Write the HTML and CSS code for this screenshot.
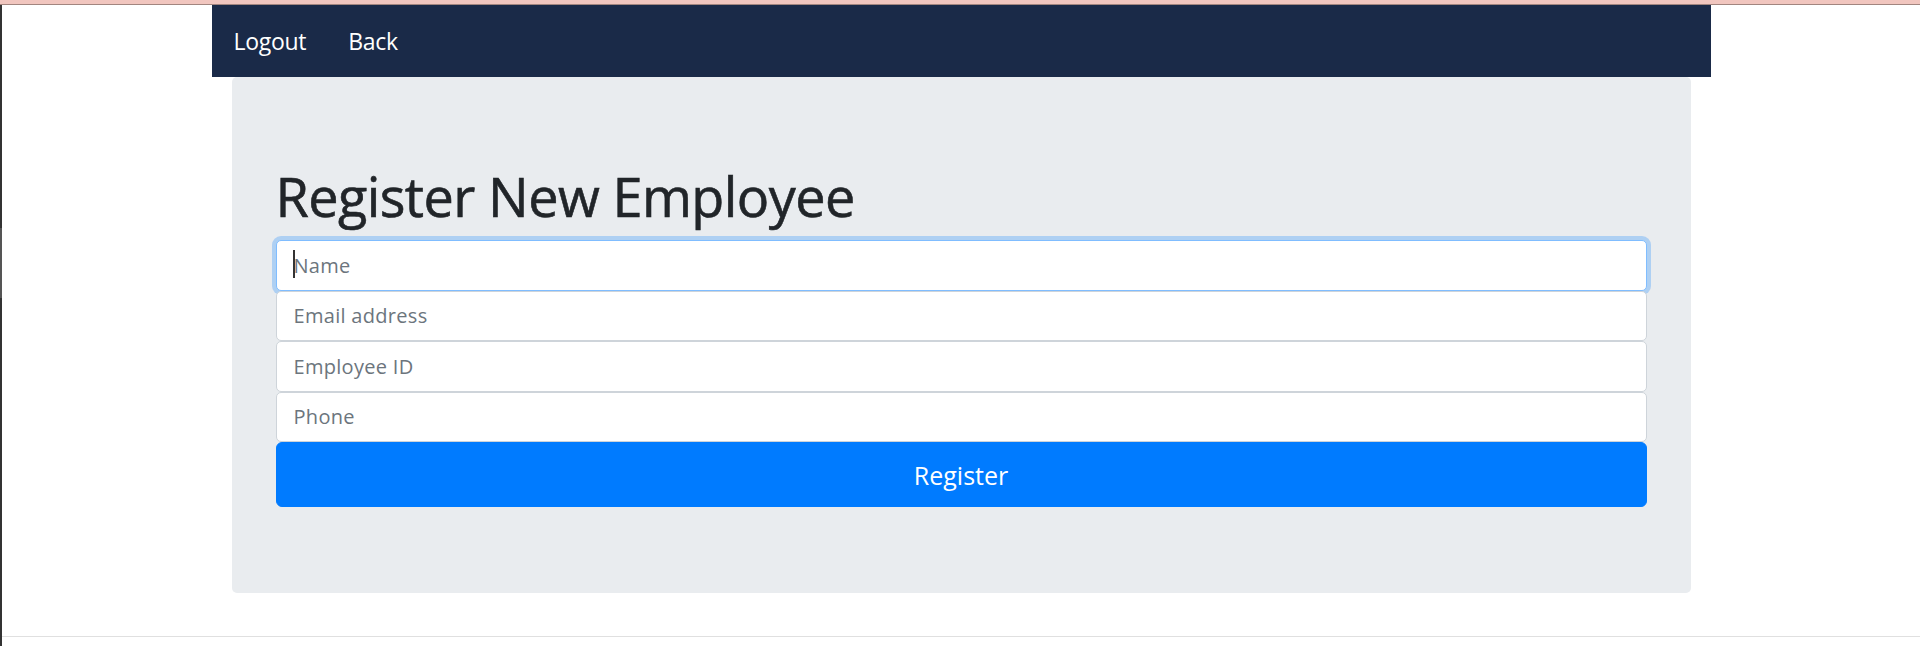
FILE: index.html
```html
<!DOCTYPE html>
<html lang="en">
<head>
<meta charset="utf-8">
<title>Register New Employee</title>
<link rel="stylesheet" href="styles.css">
</head>
<body>
<div class="topbar"></div>
<div class="window">
  <div class="edge"><div class="edge-thumb"></div></div>
  <div class="page">
    <nav class="navbar">
      <a class="nav-link" href="#">Logout</a>
      <a class="nav-link" href="#">Back</a>
    </nav>
    <div class="jumbotron">
      <h1 class="title">Register New Employee</h1>
      <form class="form">
        <div class="field field-focus"><input class="control" type="text" placeholder="Name"></div>
        <div class="field"><input class="control" type="email" placeholder="Email address"></div>
        <div class="field"><input class="control" type="text" placeholder="Employee ID"></div>
        <div class="field"><input class="control" type="text" placeholder="Phone"></div>
        <button class="btn" type="button">Register</button>
      </form>
    </div>
    <div class="footer-line"></div>
  </div>
</div>
</body>
</html>
```

FILE: styles.css
```css
* { box-sizing: border-box; }
html, body { margin: 0; padding: 0; background: #fff; }
body {
  font-family: "Open Sans", "Noto Sans", "Liberation Sans", sans-serif;
  color: #212529;
  height: 646px;
  overflow: hidden;
}
.topbar {
  height: 5px;
  background: #f1c6bf;
  border-bottom: 1px solid #a2857f;
}
.window {
  display: flex;
  height: 641px;
}
.edge {
  width: 2px;
  background: #333;
  padding-top: 223px;
}
.edge-thumb {
  height: 70px;
  background: #555;
}
.page {
  flex: 1;
  display: flex;
  flex-direction: column;
  align-items: center;
}
.navbar {
  width: 1499px;
  height: 72px;
  background: #1a2a48;
  display: flex;
  align-items: center;
  padding-left: 22px;
  gap: 42px;
}
.nav-link {
  color: #fff;
  text-decoration: none;
  font-size: 23px;
  line-height: 30px;
  letter-spacing: -0.3px;
}
.jumbotron {
  width: 1459px;
  background: #e9ecef;
  border-radius: 5px;
  padding: 86px 44px 86px;
}
.title {
  margin: 0 0 10px;
  font-weight: 400;
  font-size: 54px;
  line-height: 67px;
  letter-spacing: -0.6px;
  color: #212529;
  -webkit-text-stroke: 0.6px #212529;
}
.form {
  display: flex;
  flex-direction: column;
}
.field { position: relative; }
.control {
  display: block;
  width: 100%;
  height: 50.5px;
  margin: 0;
  padding: 0 17px;
  border: 1px solid #ced4da;
  border-radius: 5px;
  background: #fff;
  font-family: inherit;
  font-size: 20px;
  letter-spacing: 0.3px;
  color: #495057;
  outline: none;
}
.control::placeholder { color: #6c757d; opacity: 1; }
.field-focus .control {
  border-color: #80bdff;
  box-shadow: 0 0 0 4px rgba(0, 123, 255, 0.25);
}
.field-focus::after {
  content: "";
  position: absolute;
  left: 17px;
  top: 10px;
  width: 2px;
  height: 28px;
  background: #333;
}
.btn {
  display: block;
  width: 100%;
  height: 65px;
  margin: 0;
  border: 1px solid #007bff;
  border-radius: 6px;
  background: #007bff;
  color: #fff;
  font-family: inherit;
  font-size: 25px;
  letter-spacing: 0;
  cursor: pointer;
}
.footer-line {
  align-self: stretch;
  margin-top: 43px;
  height: 1px;
  background: #e0e0e0;
}
```
